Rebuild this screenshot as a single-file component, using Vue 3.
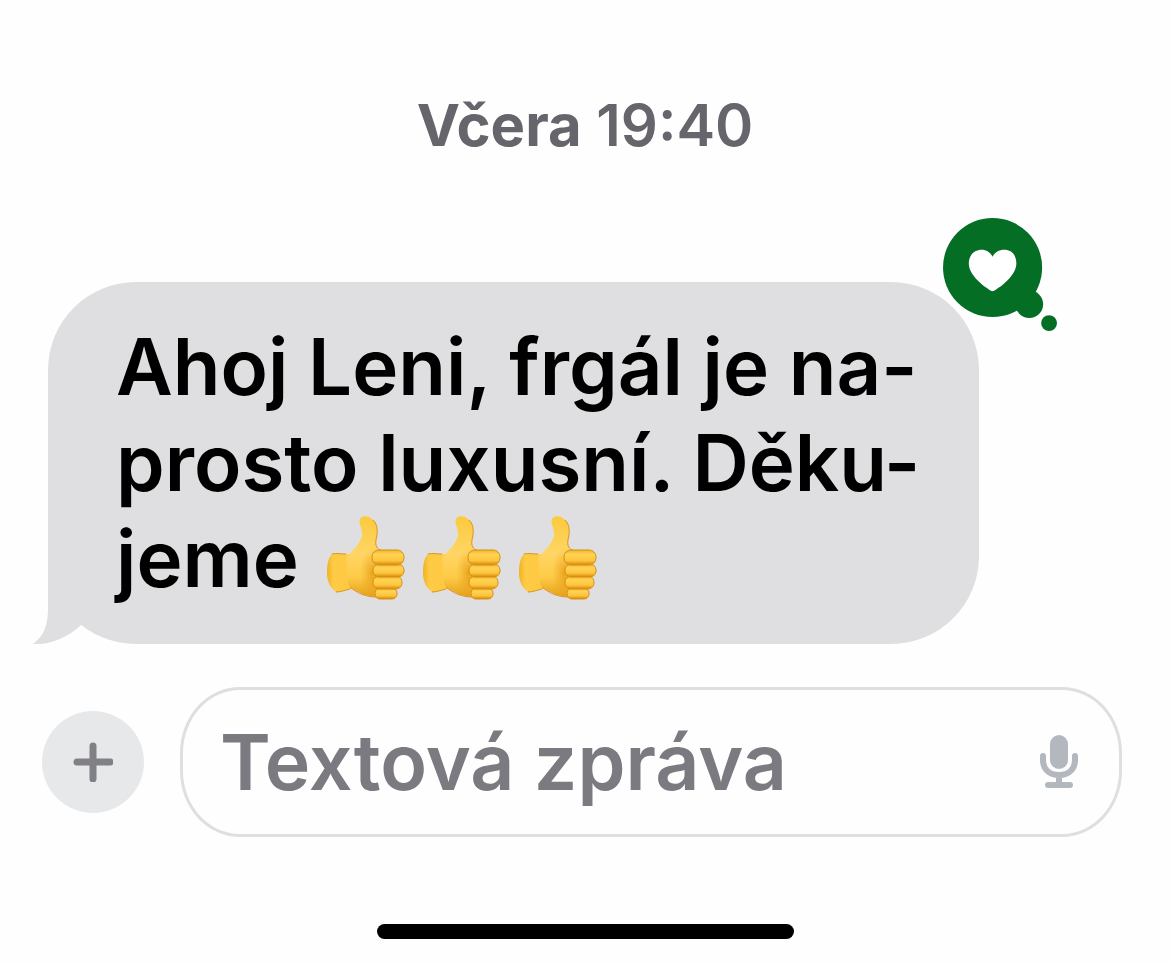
<template>
  <div class="chat">
    <main class="conversation">
      <p class="timestamp"><strong>Včera</strong> {{ time }}</p>

      <div class="bubble">
        <svg class="tail" viewBox="0 0 66 96" aria-hidden="true">
          <path d="M15 0V60C15 77 11 88 0 96C18 97 35 89 47 78L66 60V0Z" />
        </svg>
        <p class="message">
          <span v-for="line in lines" :key="line" class="line">{{ line }}</span>
          <span class="line last">
            <span>jeme</span>
            <span class="thumbs">
              <svg v-for="n in 3" :key="n" viewBox="0 0 80 86" role="img" aria-label="thumbs up">
                <defs>
                  <linearGradient :id="`hand-${n}`" x1="0" y1="0" x2="0" y2="1">
                    <stop offset="0" stop-color="#fcca3c" />
                    <stop offset="0.45" stop-color="#ffd565" />
                    <stop offset="0.75" stop-color="#fecb48" />
                    <stop offset="1" stop-color="#e5a01a" />
                  </linearGradient>
                  <linearGradient :id="`wrist-${n}`" x1="0" y1="0" x2="1" y2="0">
                    <stop offset="0" stop-color="#f2b126" />
                    <stop offset="0.2" stop-color="#fecb45" />
                    <stop offset="1" stop-color="#fdc841" />
                  </linearGradient>
                  <linearGradient :id="`finger-${n}`" x1="0" y1="0" x2="0" y2="1">
                    <stop offset="0" stop-color="#f3b325" />
                    <stop offset="0.3" stop-color="#ffd356" />
                    <stop offset="0.7" stop-color="#fdc53a" />
                    <stop offset="1" stop-color="#d58810" />
                  </linearGradient>
                  <radialGradient :id="`shade-${n}`">
                    <stop offset="0" stop-color="#d98500" stop-opacity="0.6" />
                    <stop offset="1" stop-color="#e69a0c" stop-opacity="0" />
                  </radialGradient>
                </defs>
                <path :fill="`url(#wrist-${n})`" d="M5 38C11 37 18 39 26 38L32 74L23 73C18 74 14 76 9 76C3 72 0 65 0 57C0 49 1 42 5 38Z" />
                <path class="edge" d="M5 38C10 37 14 38 19 38" />
                <path class="edge" d="M9 76C14 76 18 74 23 73" />
                <path
                  :fill="`url(#hand-${n})`"
                  d="M19 43C22 36 32 31 35 20C36 13 31 7 33 3C36 -1 42 0 45 3C51 8 51 16 49 24C48 30 50 33 54 34L66 36L64 80C57 82 45 81 38 79C31 76 26 74 21 68Z"
                />
                <ellipse :fill="`url(#shade-${n})`" cx="46" cy="57" rx="13" ry="25" />
                <path class="edge" d="M46 4C51 9 51 16 49 24C48 30 50 33 54 34" />
                <path class="edge" d="M23 71C30 77 39 81 49 81" />
                <rect class="finger" :fill="`url(#finger-${n})`" x="48" y="72" width="22" height="11" rx="5" />
                <rect class="finger" :fill="`url(#finger-${n})`" x="46" y="60" width="29" height="13" rx="6" />
                <rect class="finger" :fill="`url(#finger-${n})`" x="46" y="48" width="31" height="13" rx="6" />
                <rect class="finger" :fill="`url(#finger-${n})`" x="45" y="34" width="32" height="15" rx="7" />
              </svg>
            </span>
          </span>
        </p>
        <svg class="reaction" viewBox="0 0 116 114" role="img" aria-label="heart">
          <circle cx="50" cy="50" r="50" />
          <circle cx="87" cy="87" r="14" />
          <circle cx="107" cy="106" r="8" />
          <path
            class="heart"
            d="M50 74C48 74 26 60 26 46C26 37 32 32 39 32C44 32 48 35 50 39C52 35 56 32 62 32C69 32 74 37 74 46C74 60 52 74 50 74Z"
          />
        </svg>
      </div>
    </main>

    <form class="composer" @submit.prevent>
      <button type="button" class="btn-add" aria-label="Add">
        <svg viewBox="0 0 40 40">
          <path d="M20 4V37M4 20H37" />
        </svg>
      </button>
      <div class="field">
        <input v-model="draft" type="text" placeholder="Textová zpráva" aria-label="Textová zpráva" />
        <button type="button" class="btn-mic" aria-label="Dictate">
          <svg viewBox="0 0 38 54">
            <rect x="10" y="0" width="18" height="34" rx="9" />
            <path d="M3 21V25C3 34 9 40 19 40C29 40 35 34 35 25V21M19 40V49M8 50H30" />
          </svg>
        </button>
      </div>
    </form>

    <div class="home-bar"></div>
  </div>
</template>

<script setup>
import { ref } from 'vue'

const time = '19:40'
const lines = ['Ahoj Leni, frgál je na-', 'prosto luxusní. Děku-']
const draft = ref('')
</script>

<style>
body {
  background: #fefefe;
}
</style>

<style scoped>
.chat {
  min-height: 100vh;
  box-sizing: border-box;
  padding: 89px 0 24px;
  display: flex;
  flex-direction: column;
  font-family: Inter, "Liberation Sans", sans-serif;
  font-weight: 600;
}

.timestamp {
  margin: 0 0 121px;
  text-align: center;
  font-size: 58px;
  line-height: 72px;
  color: #66656b;
}

.timestamp strong {
  font-weight: 700;
}

.bubble {
  position: relative;
  margin: 0 191px 0 48px;
  padding: 37px 56px 37px 68px;
  border-radius: 88px;
  background: #dfdfe2;
}

.tail {
  position: absolute;
  left: -15px;
  bottom: 0;
  width: 66px;
  height: 96px;
  fill: #dfdfe2;
}

.message {
  position: relative;
  margin: 0;
  font-size: 78px;
  line-height: 96px;
  color: #000;
}

.line {
  display: block;
  white-space: nowrap;
}

.last {
  display: flex;
  align-items: center;
  gap: 28px;
}

.thumbs {
  display: flex;
  gap: 16px;
}

.thumbs svg {
  width: 80px;
  height: 86px;
}

.edge {
  fill: none;
  stroke: #dc9415;
  stroke-width: 1;
}

.finger {
  stroke: #d98f12;
  stroke-width: 1;
}

.reaction {
  position: absolute;
  top: -64px;
  right: -79px;
  width: 115px;
  height: 113px;
  fill: #036e24;
}

.heart {
  fill: #fff;
}

.composer {
  margin-top: 43px;
  padding: 0 48px 0 42px;
  display: flex;
  align-items: center;
  gap: 36px;
}

button {
  padding: 0;
  border: none;
  background: none;
  cursor: pointer;
}

.btn-add {
  display: flex;
  align-items: center;
  justify-content: center;
  flex: none;
  width: 102px;
  height: 102px;
  border-radius: 50%;
  background: #e7e8ea;
}

.btn-add svg {
  width: 40px;
  height: 40px;
  fill: none;
  stroke: #808086;
  stroke-width: 7;
  stroke-linecap: round;
}

.field {
  flex: 1;
  min-width: 0;
  box-sizing: border-box;
  height: 150px;
  padding: 0 41px 0 37px;
  display: flex;
  align-items: center;
  border: 3px solid #dfdfdf;
  border-radius: 60px / 66px;
}

.field input {
  flex: 1;
  min-width: 0;
  padding: 0;
  border: none;
  outline: none;
  background: none;
  font: inherit;
  font-size: 77px;
  line-height: 96px;
  color: #000;
}

.field input::placeholder {
  color: #7b7a80;
  opacity: 1;
}

.btn-mic svg {
  display: block;
  width: 38px;
  height: 54px;
  fill: #b3b8bf;
}

.btn-mic path {
  fill: none;
  stroke: #b3b8bf;
  stroke-width: 6;
  stroke-linecap: round;
}

.home-bar {
  align-self: center;
  width: 417px;
  max-width: 100%;
  height: 15px;
  margin-top: auto;
  border-radius: 8px;
  background: #000;
}
</style>
